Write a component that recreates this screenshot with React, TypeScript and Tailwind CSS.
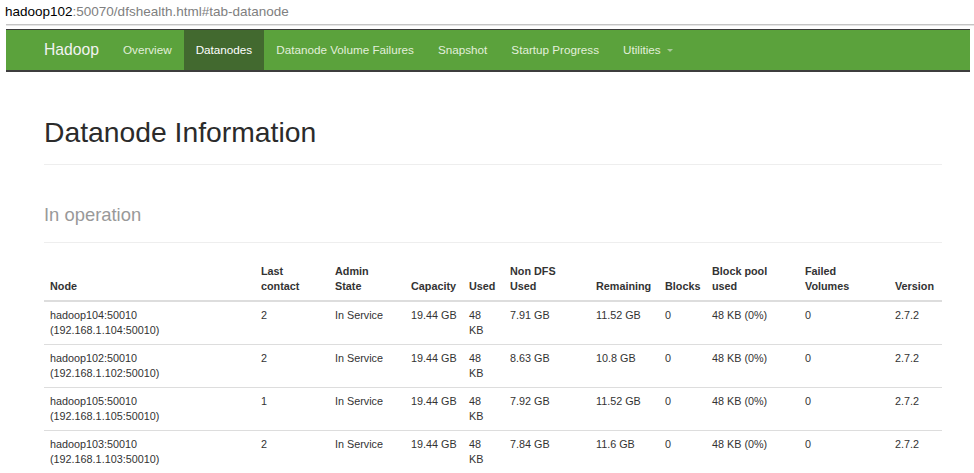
import React from 'react';

interface NodeRow {
  host: string;
  addr: string;
  lastContact: string;
  nonDfs: string;
  remaining: string;
}

const rows: NodeRow[] = [
  { host: 'hadoop104:50010', addr: '(192.168.1.104:50010)', lastContact: '2', nonDfs: '7.91 GB', remaining: '11.52 GB' },
  { host: 'hadoop102:50010', addr: '(192.168.1.102:50010)', lastContact: '2', nonDfs: '8.63 GB', remaining: '10.8 GB' },
  { host: 'hadoop105:50010', addr: '(192.168.1.105:50010)', lastContact: '1', nonDfs: '7.92 GB', remaining: '11.52 GB' },
  { host: 'hadoop103:50010', addr: '(192.168.1.103:50010)', lastContact: '2', nonDfs: '7.84 GB', remaining: '11.6 GB' },
];

const navItems = ['Overview', 'Datanodes', 'Datanode Volume Failures', 'Snapshot', 'Startup Progress'];

const App: React.FC = () => {
  return (
    <div className="w-[974px] h-[473px] overflow-hidden bg-white text-[#333] font-['Liberation_Sans',Arial,sans-serif]">
      {/* address bar */}
      <div className="h-[24px] pl-[5px] flex items-center text-[13.5px] text-[#808080]">
        <span className="text-black">hadoop102</span>
        <span>:50070/dfshealth.html#tab-datanode</span>
      </div>
      <div className="ml-[6px] h-[1px] bg-[#c4c4c4]" />
      <div className="ml-[6px] h-[1px] bg-[#e6e6e6]" />
      <div className="h-[3px]" />

      {/* navbar */}
      <nav className="ml-[6px] mr-[4px] h-[43px] flex items-stretch bg-[#5ba23c] border-t border-t-[#3a3a3a] border-b-2 border-b-[#3e3e3e] pl-[26px]">
        <span className="flex items-center px-[12px] text-[15.7px] text-[#f2f2f2]">Hadoop</span>
        {navItems.map((item) => (
          <span
            key={item}
            className={`flex items-center px-[12px] text-[11.7px] ${
              item === 'Datanodes' ? 'bg-[#42692f] text-white' : 'text-[#e2efdb]'
            }`}
          >
            {item}
          </span>
        ))}
        <span className="flex items-center px-[12px] text-[11.7px] text-[#e2efdb]">
          Utilities
          <span className="ml-[6px] w-0 h-0 border-x-[3px] border-x-transparent border-t-[3px] border-t-[#a9c99a]" />
        </span>
      </nav>

      <main className="pl-[44px] pr-[32px]">
        <h1 className="mt-[45px] pb-[16px] text-[28.3px] leading-[31px] text-[#2b2b2b] border-b border-[#eee]">
          Datanode Information
        </h1>
        <h3 className="mt-[40px] pb-[17px] text-[18.4px] leading-[20px] text-[#999] border-b border-[#eee]">
          In operation
        </h3>

        <table className="mt-[15px] w-full table-fixed border-collapse text-[10.8px] leading-[15px] whitespace-nowrap">
          <colgroup>
            <col className="w-[211px]" />
            <col className="w-[74px]" />
            <col className="w-[76px]" />
            <col className="w-[58px]" />
            <col className="w-[41px]" />
            <col className="w-[86px]" />
            <col className="w-[69px]" />
            <col className="w-[47px]" />
            <col className="w-[93px]" />
            <col className="w-[90px]" />
            <col className="w-[53px]" />
          </colgroup>
          <thead>
            <tr className="border-b-2 border-[#ddd] text-left align-bottom font-bold">
              <th className="p-[6px]">Node</th>
              <th className="p-[6px]">Last<br />contact</th>
              <th className="p-[6px]">Admin<br />State</th>
              <th className="p-[6px]">Capacity</th>
              <th className="p-[6px]">Used</th>
              <th className="p-[6px]">Non DFS<br />Used</th>
              <th className="p-[6px]">Remaining</th>
              <th className="p-[6px]">Blocks</th>
              <th className="p-[6px]">Block pool<br />used</th>
              <th className="p-[6px]">Failed<br />Volumes</th>
              <th className="p-[6px]">Version</th>
            </tr>
          </thead>
          <tbody>
            {rows.map((r, i) => (
              <tr key={r.host} className={`align-top ${i > 0 ? 'border-t border-[#ddd]' : ''}`}>
                <td className="p-[6px]">{r.host}<br />{r.addr}</td>
                <td className="p-[6px]">{r.lastContact}</td>
                <td className="p-[6px]">In Service</td>
                <td className="p-[6px]">19.44 GB</td>
                <td className="p-[6px]">48<br />KB</td>
                <td className="p-[6px]">{r.nonDfs}</td>
                <td className="p-[6px]">{r.remaining}</td>
                <td className="p-[6px]">0</td>
                <td className="p-[6px]">48 KB (0%)</td>
                <td className="p-[6px]">0</td>
                <td className="p-[6px]">2.7.2</td>
              </tr>
            ))}
          </tbody>
        </table>
      </main>
    </div>
  );
};

export default App;
